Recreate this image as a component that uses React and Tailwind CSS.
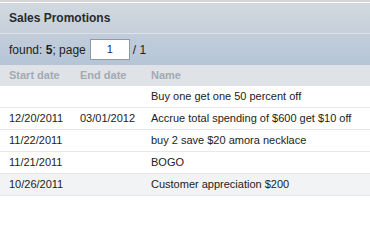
const promos = [
  { start: '', end: '', name: 'Buy one get one 50 percent off' },
  { start: '12/20/2011', end: '03/01/2012', name: 'Accrue total spending of $600 get $10 off' },
  { start: '11/22/2011', end: '', name: 'buy 2 save $20 amora necklace' },
  { start: '11/21/2011', end: '', name: 'BOGO' },
  { start: '10/26/2011', end: '', name: 'Customer appreciation $200' },
]

export default function App() {
  return (
    <div className="h-[234px] w-[370px] overflow-hidden bg-white font-['Liberation_Sans',Arial,sans-serif] text-[#222]">
      <div className="h-[2px] bg-[#d3d5d8]" />
      <div className="h-px bg-white" />
      <div className="flex h-[30px] items-center bg-gradient-to-b from-[#d1d8e0] to-[#c6d0da] pl-[9px] text-[12px] font-bold text-[#2a2a2a]">
        Sales Promotions
      </div>
      <div className="h-px bg-[#dce3ea]" />
      <div className="flex h-[31px] items-center bg-gradient-to-b from-[#c2cddb] to-[#b5c5d6] pl-[9px] text-[12px] text-[#1e1e1e]">
        <span>
          found: <b>5</b>; page
        </span>
        <div className="ml-[4px] flex h-[21px] w-[40px] items-center justify-center border border-[#8e9aab] bg-white text-[11px] text-[#1a2a6a]">
          1
        </div>
        <span className="ml-[3px]">/ 1</span>
      </div>
      <div className="flex h-[21px] items-center bg-[#dfe2e6] text-[11px] font-bold text-[#a3aab2]">
        <div className="w-[71px] pl-[9px]">Start date</div>
        <div className="w-[71px] pl-[9px]">End date</div>
        <div className="pl-[9px]">Name</div>
      </div>
      {promos.map((p, i) => (
        <div
          key={i}
          className={
            'flex h-[22px] items-center border-b border-[#e6e7e9] text-[11px] ' +
            (i === 4 ? 'bg-[#f2f3f5]' : 'bg-white')
          }
        >
          <div className="w-[71px] pl-[9px]">{p.start}</div>
          <div className="w-[71px] pl-[9px]">{p.end}</div>
          <div className="pl-[9px]">{p.name}</div>
        </div>
      ))}
    </div>
  )
}
